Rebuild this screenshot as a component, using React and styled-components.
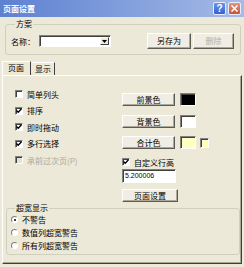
import React from 'react';
import styled, { createGlobalStyle } from 'styled-components';

const GlobalStyle = createGlobalStyle`
  html, body {
    margin: 0;
    padding: 0;
    background: #ece9d8;
  }
  body {
    font-family: "Noto Sans CJK SC", "Liberation Sans", sans-serif;
    font-size: 8px;
    color: #000;
  }
`;

const Dialog = styled.div`
  width: 244px;
  height: 267px;
  background: #ece9d8;
  display: flex;
  flex-direction: column;
  overflow: hidden;
`;

const TitleBar = styled.div`
  height: 17px;
  flex: none;
  display: flex;
  align-items: center;
  justify-content: space-between;
  padding: 0 3px;
  background: linear-gradient(to right, #5d80d1, #84a1dd 55%, #a6bbe5);
`;

const Title = styled.span`
  color: #fff;
  font-size: 8px;
  font-weight: 700;
  line-height: 10px;
`;

const CaptionButtons = styled.div`
  display: flex;
  gap: 2px;
`;

const CaptionButton = styled.div`
  width: 13px;
  height: 13px;
  box-sizing: border-box;
  border: 1px solid #e6ecfa;
  border-radius: 2px;
  background: ${p => (p.$close ? 'linear-gradient(#e39480, #c5533f)' : 'linear-gradient(#6a93e8, #3062d2)')};
  display: flex;
  align-items: center;
  justify-content: center;
  color: #fff;
  font: bold 10px "Liberation Sans", sans-serif;
`;

const Content = styled.div`
  flex: 1;
  display: flex;
  flex-direction: column;
  padding: 2px 2px 3px;
  min-height: 0;
`;

const GroupBox = styled.fieldset`
  margin: ${p => p.$margin};
  border: 1px solid #d0d0bf;
  border-radius: 3px;
  padding: ${p => p.$padding};
  min-width: 0;
`;

const Legend = styled.legend`
  padding: 0 1px;
  margin-left: 4px;
  font-size: 8px;
  line-height: 10px;
`;

const SchemeRow = styled.div`
  display: flex;
  align-items: center;
  height: 16px;
`;

const FieldLabel = styled.span`
  width: 28px;
`;

const Combo = styled.div`
  width: 72px;
  height: 12px;
  box-sizing: border-box;
  background: #fff;
  border: 1px solid;
  border-color: #808080 #fff #fff #808080;
  box-shadow: inset 1px 1px 0 #404040;
  display: flex;
  justify-content: flex-end;
  padding: 1px;
`;

const DropButton = styled.div`
  width: 9px;
  box-sizing: border-box;
  background: #ece9d8;
  border: 1px solid;
  border-color: #fff #404040 #404040 #fff;
  display: flex;
  align-items: center;
  justify-content: center;
`;

const Spacer = styled.div`
  flex: 1;
`;

const PushButton = styled.button`
  width: ${p => p.$w}px;
  height: ${p => p.$h}px;
  margin: 0 0 0 ${p => p.$ml || 0}px;
  padding: 0;
  box-sizing: border-box;
  font-family: inherit;
  font-size: 8px;
  line-height: 8px;
  color: ${p => (p.disabled ? '#b3b0a2' : '#000')};
  background: #f0eee4;
  border: 1px solid;
  border-color: #fff #5e5c52 #5e5c52 #fff;
  box-shadow: inset -1px -1px 0 #aca899;
  flex: none;
`;

const TabRow = styled.div`
  display: flex;
  align-items: flex-end;
  height: 14px;
  margin-top: 6px;
  flex: none;
`;

const Tab = styled.div`
  height: ${p => (p.$active ? 14 : 13)}px;
  box-sizing: border-box;
  padding-left: ${p => p.$pl}px;
  width: ${p => p.$w}px;
  border-top: 1px solid #fff;
  border-left: 1px solid ${p => (p.$active ? '#fff' : 'transparent')};
  border-right: 1px solid #404040;
  line-height: 11px;
  background: #ece9d8;
`;

const Panel = styled.div`
  flex: 1;
  display: flex;
  flex-direction: column;
  border-top: 1px solid #fff;
  border-left: 1px solid #fff;
  border-right: 1px solid #404040;
  border-bottom: 1px solid #404040;
  box-shadow: inset -1px -1px 0 #a8a496;
`;

const Columns = styled.div`
  display: grid;
  grid-template-columns: 107px 1fr;
  padding-left: 12px;
`;

const LeftColumn = styled.div`
  margin-top: 10px;
  display: flex;
  flex-direction: column;
`;

const RightColumn = styled.div`
  margin-top: 17px;
  display: flex;
  flex-direction: column;
`;

const CheckRow = styled.label`
  display: flex;
  align-items: center;
  gap: 4px;
  height: ${p => p.$h || 16.5}px;
  color: ${p => (p.$disabled ? '#aca899' : '#000')};
`;

const Box = styled.span`
  width: 8px;
  height: 8px;
  box-sizing: border-box;
  flex: none;
  border: 1px solid;
  border-color: #808080 #fff #fff #808080;
  box-shadow: inset 1px 1px 0 #404040;
  background: ${p => (p.$disabled ? '#e4e1d3' : '#fff')};
  display: flex;
  align-items: center;
  justify-content: center;
`;

const ColorRow = styled.div`
  display: flex;
  align-items: center;
  gap: 5px;
  height: 13px;
  margin-bottom: ${p => p.$mb}px;
`;

const Swatch = styled.span`
  width: ${p => p.$w}px;
  height: ${p => p.$h}px;
  box-sizing: border-box;
  border: 1px solid;
  border-color: #808080 #fff #fff #808080;
  box-shadow: inset 1px 1px 0 #404040;
  background: ${p => p.$color};
`;

const SmallSwatch = styled(Swatch)`
  margin-left: -1px;
`;

const NumberInput = styled.div`
  width: 54px;
  height: 14px;
  box-sizing: border-box;
  margin: 2px 0 6px;
  padding-left: 2px;
  background: #fff;
  border: 1px solid;
  border-color: #808080 #fff #fff #808080;
  box-shadow: inset 1px 1px 0 #404040;
  font: 7px/12px "Liberation Sans", sans-serif;
`;

const RadioRow = styled.label`
  display: flex;
  align-items: center;
  gap: 4px;
  height: 13px;
`;

const RadioCircle = styled.span`
  width: 7px;
  height: 7px;
  box-sizing: border-box;
  border-radius: 50%;
  border: 1px solid;
  border-color: #808080 #fff #fff #808080;
  background: #fff;
  display: flex;
  align-items: center;
  justify-content: center;
  &::after {
    content: '';
    width: 2px;
    height: 2px;
    border-radius: 50%;
    background: ${p => (p.$on ? '#000' : 'transparent')};
  }
`;

const Check = ({ checked, disabled }) => (
  <Box $disabled={disabled}>
    {checked && (
      <svg width="6" height="6" viewBox="0 0 6 6">
        <path d="M0.5 2.5 L2.2 4.3 L5.5 0.8" stroke="#000" strokeWidth="1.3" fill="none" />
      </svg>
    )}
  </Box>
);

const checks = [
  { label: '简单列头', checked: false },
  { label: '排序', checked: true },
  { label: '即时拖动', checked: true },
  { label: '多行选择', checked: true },
  { label: '承前过次页(P)', checked: false, disabled: true },
];

const colors = [
  { label: '前景色', color: '#000', mb: 9 },
  { label: '背景色', color: '#fff', mb: 8 },
  { label: '合计色', color: '#ffffc2', mb: 8, extra: true },
];

const radios = [
  { label: '不警告', on: true },
  { label: '数值列超宽警告' },
  { label: '所有列超宽警告' },
];

export default function App() {
  return (
    <Dialog>
      <GlobalStyle />
      <TitleBar>
        <Title>页面设置</Title>
        <CaptionButtons>
          <CaptionButton>?</CaptionButton>
          <CaptionButton $close>
            <svg width="7" height="7" viewBox="0 0 7 7">
              <path d="M0.5 0.5 L6.5 6.5 M6.5 0.5 L0.5 6.5" stroke="#fff" strokeWidth="1.5" />
            </svg>
          </CaptionButton>
        </CaptionButtons>
      </TitleBar>
      <Content>
        <GroupBox $margin="0 1px 0 3px" $padding="4px 6px 5px 5px">
          <Legend>方案</Legend>
          <SchemeRow>
            <FieldLabel>名称：</FieldLabel>
            <Combo>
              <DropButton>
                <svg width="5" height="3" viewBox="0 0 5 3">
                  <path d="M0 0 H5 L2.5 3 Z" fill="#000" />
                </svg>
              </DropButton>
            </Combo>
            <Spacer />
            <PushButton $w={44} $h={16}>另存为</PushButton>
            <PushButton $w={41} $h={16} $ml={2} disabled>删除</PushButton>
          </SchemeRow>
        </GroupBox>
        <TabRow>
          <Tab $active $w={29} $pl={5}>页面</Tab>
          <Tab $w={24} $pl={3}>显示</Tab>
        </TabRow>
        <Panel>
          <Columns>
            <LeftColumn>
              {checks.map(c => (
                <CheckRow key={c.label} $disabled={c.disabled}>
                  <Check checked={c.checked} disabled={c.disabled} />
                  {c.label}
                </CheckRow>
              ))}
            </LeftColumn>
            <RightColumn>
              {colors.map(c => (
                <ColorRow key={c.label} $mb={c.mb}>
                  <PushButton $w={53} $h={13}>{c.label}</PushButton>
                  <Swatch $w={16} $h={13} $color={c.color} />
                  {c.extra && <SmallSwatch $w={9} $h={10} $color="#ffffc2" />}
                </ColorRow>
              ))}
              <CheckRow $h={10}>
                <Check checked />
                自定义行高
              </CheckRow>
              <NumberInput>5.200006</NumberInput>
              <PushButton $w={56} $h={13}>页面设置</PushButton>
            </RightColumn>
          </Columns>
          <GroupBox $margin="1px 1px 0 3px" $padding="0 4px 2px 4px">
            <Legend>超宽显示</Legend>
            {radios.map(r => (
              <RadioRow key={r.label}>
                <RadioCircle $on={r.on} />
                {r.label}
              </RadioRow>
            ))}
          </GroupBox>
        </Panel>
      </Content>
    </Dialog>
  );
}
